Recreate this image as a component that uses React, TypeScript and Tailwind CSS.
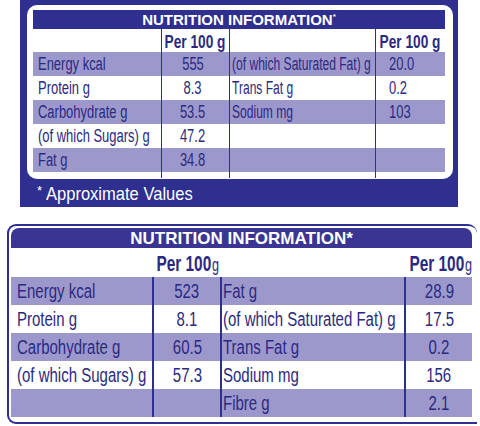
import React from "react";

type Row = [string, string, string, string];

const topRows: Row[] = [
  ["Energy kcal", "555", "(of which Saturated Fat) g", "20.0"],
  ["Protein g", "8.3", "Trans Fat g", "0.2"],
  ["Carbohydrate g", "53.5", "Sodium mg", "103"],
  ["(of which Sugars) g", "47.2", "", ""],
  ["Fat g", "34.8", "", ""],
];

const bottomRows: Row[] = [
  ["Energy kcal", "523", "Fat g", "28.9"],
  ["Protein g", "8.1", "(of which Saturated Fat) g", "17.5"],
  ["Carbohydrate g", "60.5", "Trans Fat g", "0.2"],
  ["(of which Sugars) g", "57.3", "Sodium mg", "156"],
  ["", "", "Fibre g", "2.1"],
];

// the label font is a narrow Gill Sans, so squeeze Liberation Sans sideways
const Left: React.FC<{ children: React.ReactNode; s?: string }> = ({ children, s = "scale-x-[0.72]" }) => (
  <span className={`inline-block origin-left whitespace-nowrap ${s}`}>{children}</span>
);
const Mid: React.FC<{ children: React.ReactNode; s?: string }> = ({ children, s = "scale-x-[0.72]" }) => (
  <span className={`inline-block origin-center whitespace-nowrap ${s}`}>{children}</span>
);

const TopPanel: React.FC = () => {
  return (
    <div className="ml-[20px] h-[207px] w-[438px] bg-[#2e2f8f] pl-[7px] pt-[5px]">
      <div className="h-[174px] w-[426px] rounded-[10px] bg-white pl-[6px] pt-[5px]">
        <div className="flex h-[19px] w-[412px] items-center justify-center bg-[#2e2f8f] text-[15px] font-bold leading-none text-white">
          NUTRITION INFORMATION<span className="mb-[6px] text-[8px]">*</span>
        </div>

        <div className="grid w-[412px] grid-cols-[128px_68px_146px_70px] text-[18px] leading-none text-[#2b2a80]">
          <div className="h-[23px]" />
          <div className="flex h-[23px] items-center justify-center border-l-[1.5px] border-[#2e2f8f] pt-[2px] font-bold">
            <Mid s="scale-x-[0.76]">Per 100 g</Mid>
          </div>
          <div className="h-[23px] border-l-[1.5px] border-[#2e2f8f]" />
          <div className="flex h-[23px] items-center justify-center border-l-[1.5px] border-[#2e2f8f] pt-[2px] font-bold">
            <Mid s="scale-x-[0.76]">Per 100 g</Mid>
          </div>

          {topRows.map((row, i) => {
            const bg = i % 2 === 0 ? "bg-[#9c98cc]" : "bg-white";
            return (
              <React.Fragment key={i}>
                <div className={`flex h-[24px] items-center pl-[5px] ${bg}`}>
                  <Left>{row[0]}</Left>
                </div>
                <div className={`flex h-[24px] items-center justify-center border-l-[1.5px] border-[#2e2f8f] pr-[5px] ${bg}`}>
                  <Mid>{row[1]}</Mid>
                </div>
                <div className={`flex h-[24px] items-center border-l-[1.5px] border-[#2e2f8f] pl-[2px] ${bg}`}>
                  <Left s="scale-x-[0.67]">{row[2]}</Left>
                </div>
                <div className={`flex h-[24px] items-center border-l-[1.5px] border-[#2e2f8f] pl-[13px] ${bg}`}>
                  <Left>{row[3]}</Left>
                </div>
              </React.Fragment>
            );
          })}

          <div className="h-[6px]" />
          <div className="h-[6px] border-l-[1.5px] border-[#2e2f8f]" />
          <div className="h-[6px] border-l-[1.5px] border-[#2e2f8f]" />
          <div className="h-[6px] border-l-[1.5px] border-[#2e2f8f]" />
        </div>
      </div>

      <div className="flex h-[28px] items-center pl-[10px] text-[19px] leading-none text-white">
        <span className="mb-[6px] mr-[4px] text-[13px]">*</span>
        <Left s="scale-x-[0.87]">Approximate Values</Left>
      </div>
    </div>
  );
};

const BottomPanel: React.FC = () => {
  return (
    <div className="ml-[7px] mt-[17px] h-[200px] w-[470px] rounded-l-[9px] rounded-tr-[9px] border-2 border-r-0 border-[#2e2f8f] p-[2px] pr-0">
      <div className="flex h-[20px] w-[461px] items-center justify-center rounded-t-[8px] bg-[#3a3592] text-[17px] font-bold leading-none text-white">
        NUTRITION INFORMATION*
      </div>

      <div className="grid w-[461px] grid-cols-[141px_68px_184px_68px] text-[20px] leading-none text-[#2b2a80]">
        <div className="h-[29px]" />
        <div className="flex h-[29px] items-center justify-center pl-[3px] pt-[2px] text-[22px] font-bold">
          <Mid s="scale-x-[0.7]">
            Per 100<span className="ml-[1px] text-[18px] font-normal">g</span>
          </Mid>
        </div>
        <div className="h-[29px]" />
        <div className="flex h-[29px] items-center justify-center pl-[5px] pt-[2px] text-[22px] font-bold">
          <Mid s="scale-x-[0.7]">
            Per 100<span className="ml-[1px] text-[18px] font-normal">g</span>
          </Mid>
        </div>

        {bottomRows.map((row, i) => {
          const bg = i % 2 === 0 ? "bg-[#9c98cc]" : "bg-white";
          return (
            <React.Fragment key={i}>
              <div className={`flex h-[28px] items-center pl-[6px] ${bg}`}>
                <Left s="scale-x-[0.75]">{row[0]}</Left>
              </div>
              <div className={`flex h-[28px] items-center justify-center border-l-2 border-[#2e2f8f] ${bg}`}>
                <Mid s="scale-x-[0.75]">{row[1]}</Mid>
              </div>
              <div className={`flex h-[28px] items-center border-l-2 border-[#2e2f8f] pl-[1px] ${bg}`}>
                <Left s="scale-x-[0.75]">{row[2]}</Left>
              </div>
              <div className={`flex h-[28px] items-center justify-center border-l-2 border-[#2e2f8f] ${bg}`}>
                <Mid s="scale-x-[0.75]">{row[3]}</Mid>
              </div>
            </React.Fragment>
          );
        })}
      </div>
    </div>
  );
};

export default function App() {
  return (
    <div className="h-[426px] w-[480px] overflow-hidden bg-white font-['Liberation_Sans',sans-serif]">
      <TopPanel />
      <BottomPanel />
    </div>
  );
}
